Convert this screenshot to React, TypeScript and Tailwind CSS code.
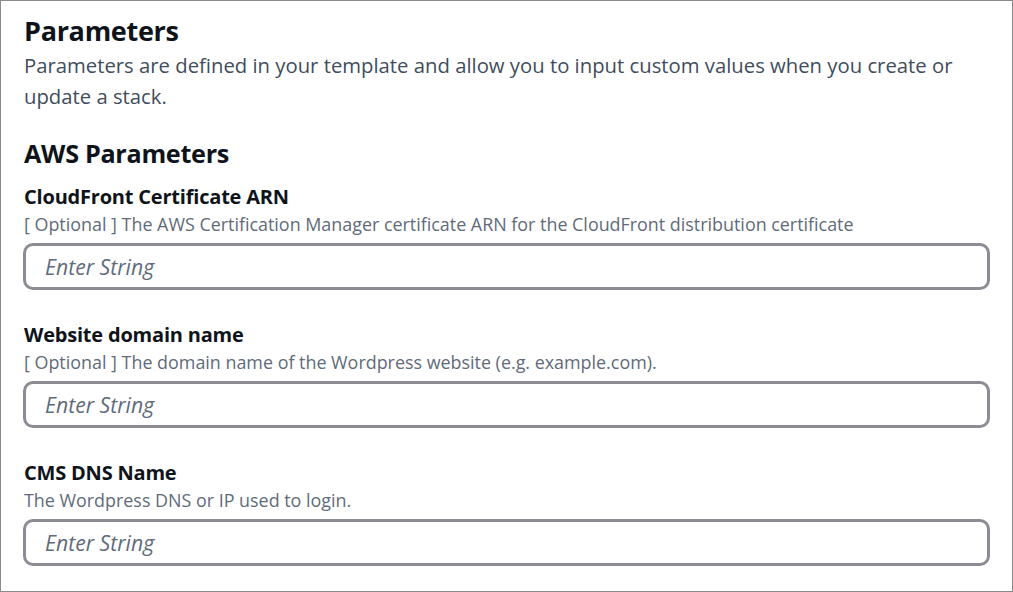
const fields = [
  {
    label: "CloudFront Certificate ARN",
    hint: "[ Optional ] The AWS Certification Manager certificate ARN for the CloudFront distribution certificate",
  },
  {
    label: "Website domain name",
    hint: "[ Optional ] The domain name of the Wordpress website (e.g. example.com).",
  },
  {
    label: "CMS DNS Name",
    hint: "The Wordpress DNS or IP used to login.",
  },
];

export default function App() {
  return (
    <div
      className="w-[1013px] h-[592px] border border-[#8a8a8a] bg-white pl-[22px] pr-[22px] pt-[13px] overflow-hidden"
      style={{ fontFamily: '"Open Sans", "Noto Sans", sans-serif' }}
    >
      <h1 className="pl-[1px] text-[27px] leading-[34px] font-bold text-[#0f141a] tracking-[-0.3px]">Parameters</h1>
      <p className="pl-[1px] mt-[2px] text-[20.3px] leading-[31px] text-[#414d5c] w-[960px]">
        Parameters are defined in your template and allow you to input custom values when you create or update a stack.
      </p>
      <h2 className="pl-[1px] mt-[26px] text-[25.2px] leading-[30px] font-bold text-[#0f141a] tracking-[-0.3px]">AWS Parameters</h2>
      <div className="mt-[17px] flex flex-col gap-[33px]">
        {fields.map((f) => (
          <div key={f.label}>
            <div className="pl-[1px] text-[20px] leading-[24px] font-bold text-[#0f141a] tracking-[-0.2px]">{f.label}</div>
            <div className="pl-[1px] mt-[3px] text-[17.9px] leading-[24px] text-[#5f6b7a]">{f.hint}</div>
            <div className="mt-[7px] h-[47px] rounded-[10px] border-[3px] border-[#8c8c94] flex items-center px-[19px]">
              <span className="text-[21.2px] italic text-[#5f6b7a]">Enter String</span>
            </div>
          </div>
        ))}
      </div>
    </div>
  );
}
